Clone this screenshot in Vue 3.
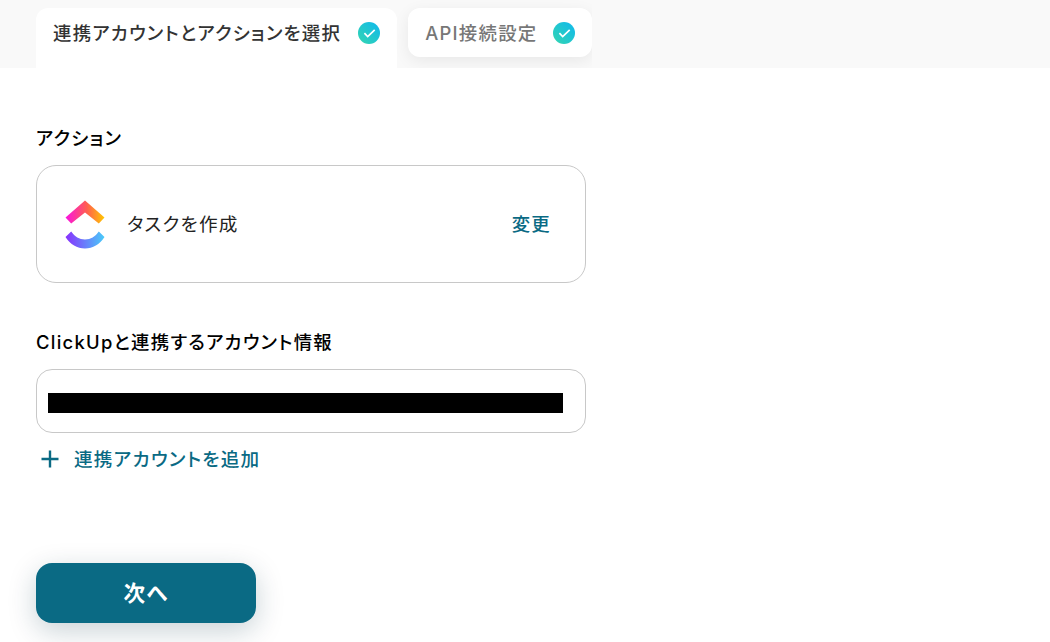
<script setup>
const tabs = [
  { label: "連携アカウントとアクションを選択", active: true },
  { label: "API接続設定", active: false },
];
</script>

<template>
  <div class="page">
    <div class="tab-bar">
      <div class="tabs">
        <div v-for="tab in tabs" :key="tab.label" :class="tab.active ? 'tab active' : 'tab'">
          <span class="tab-label">{{ tab.label }}</span>
          <svg class="check" width="22" height="22" viewBox="0 0 22 22">
            <defs>
              <linearGradient :id="'grad-' + tab.active" x1="0" y1="1" x2="1" y2="0">
                <stop offset="0" stop-color="#34d6b0" />
                <stop offset="1" stop-color="#0fb8ee" />
              </linearGradient>
            </defs>
            <circle cx="11" cy="11" r="11" :fill="'url(#grad-' + tab.active + ')'" />
            <path d="M6.4 11.2l3.300 3.300 7-6.600" fill="none" stroke="#fff" stroke-width="1.7" />
          </svg>
        </div>
      </div>
    </div>

    <main class="content">
      <h2 class="label">アクション</h2>
      <div class="action-card">
        <svg class="logo" width="40" height="49" viewBox="0 0 40 49">
          <defs>
            <linearGradient id="up" x1="0" y1="0" x2="1" y2="0">
              <stop offset="0" stop-color="#fa12e3" />
              <stop offset="0.55" stop-color="#ff5f4f" />
              <stop offset="1" stop-color="#ffc800" />
            </linearGradient>
            <linearGradient id="down" x1="0" y1="0" x2="1" y2="0">
              <stop offset="0" stop-color="#8930fd" />
              <stop offset="1" stop-color="#49ccf9" />
            </linearGradient>
          </defs>
          <path d="M20 0.500L39.500 17.500 33.800 23.500 20 12.500 6.200 23.500 0.500 17.500Z" fill="url(#up)" />
          <path d="M0.500 37L6.200 31.500C9.800 36.800 14.300 39.500 20 39.500 25.700 39.500 30.200 36.800 33.800 31.500L39.500 37C34.500 44.500 28 48.500 20 48.500 12 48.500 5.500 44.500 0.500 37Z" fill="url(#down)" />
        </svg>
        <span class="action-name">タスクを作成</span>
        <a class="change">変更</a>
      </div>

      <h2 class="label account-label">ClickUpと連携するアカウント情報</h2>
      <div class="account-box">
        <div class="redacted"></div>
      </div>
      <a class="add-account">
        <svg class="plus" width="20" height="20" viewBox="0 0 20 20">
          <path d="M10 1.500v17M1.500 10h17" stroke="#0a6a84" stroke-width="2.4" fill="none" />
        </svg>
        <span>連携アカウントを追加</span>
      </a>

      <button class="next">次へ</button>
    </main>
  </div>
</template>

<style scoped>
  .page {
    width: 1050px;
    height: 642px;
    overflow: hidden;
    background: #fff;
    color: #000;
    font-family: Inter, "Noto Sans CJK JP", sans-serif;
    font-feature-settings: "palt";
    letter-spacing: 0.08em;
  }

  .tab-bar {
    height: 68px;
    background: #f9f9f9;
  }

  .tabs {
    display: flex;
    align-items: flex-start;
    gap: 11px;
    width: 592px;
    height: 68px;
    overflow: hidden;
    box-sizing: border-box;
    padding: 8px 0 0 36px;
  }

  .tab {
    flex: none;
    display: flex;
    align-items: center;
    height: 49px;
    box-sizing: border-box;
    padding: 0 17px 2px 17px;
    background: #fff;
    border-radius: 12px;
    font-size: 18.4px;
    font-weight: 500;
    white-space: nowrap;
    color: #777;
    box-shadow: 0 4px 16px rgba(0, 0, 0, 0.07);
  }

  .tab.active {
    height: 60px;
    padding: 0 17px 13px 17px;
    border-radius: 12px 12px 0 0;
    color: #333;
    box-shadow: none;
  }

  .tab-label {
    margin-right: 15px;
  }

  .active .tab-label {
    margin-right: 17px;
  }

  .check {
    flex: none;
    margin-top: 2px;
  }

  .content {
    display: flex;
    flex-direction: column;
    align-items: flex-start;
    padding: 0 0 0 36px;
  }

  .label {
    margin: 58px 0 15px;
    height: 24px;
    font-size: 18.4px;
    line-height: 24px;
    font-weight: 500;
  }

  .action-card {
    display: flex;
    align-items: center;
    width: 550px;
    height: 118px;
    box-sizing: border-box;
    padding: 0 34px 0 28px;
    border: 1px solid #c8c8c8;
    border-radius: 20px;
  }

  .logo {
    flex: none;
    margin-right: 22px;
  }

  .action-name {
    flex: 1;
    font-size: 18.6px;
    line-height: 24px;
    color: #222;
  }

  .change {
    font-size: 18.4px;
    line-height: 24px;
    font-weight: 500;
    color: #0a6a84;
  }

  .account-label {
    margin: 47px 0 15px;
  }

  .account-box {
    display: flex;
    align-items: center;
    width: 550px;
    height: 64px;
    box-sizing: border-box;
    padding: 4px 22px 0 11px;
    border: 1px solid #c8c8c8;
    border-radius: 16px;
  }

  .redacted {
    width: 515px;
    height: 20px;
    background: #000;
  }

  .add-account {
    display: flex;
    align-items: center;
    margin-top: 14px;
    height: 24px;
    font-size: 18.6px;
    line-height: 24px;
    font-weight: 500;
    color: #0a6a84;
  }

  .plus {
    margin: 0 14px 0 4px;
  }

  .next {
    width: 220px;
    height: 60px;
    margin-top: 92px;
    padding-bottom: 5px;
    border: none;
    border-radius: 16px;
    background: #0a6a84;
    color: #fff;
    font-family: inherit;
    font-feature-settings: inherit;
    letter-spacing: inherit;
    font-size: 21.6px;
    font-weight: 700;
    box-shadow: 0 8px 28px rgba(10, 50, 70, 0.22);
  }
</style>
